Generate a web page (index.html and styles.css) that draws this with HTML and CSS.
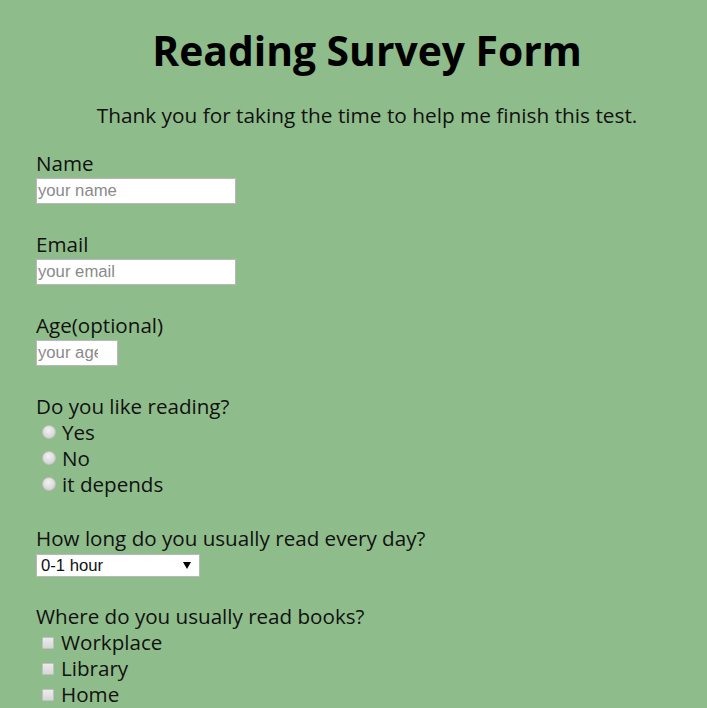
FILE: index.html
```
<!DOCTYPE html>
<html lang="en">
<head>
<meta charset="utf-8">
<title>Reading Survey Form</title>
<link rel="stylesheet" href="styles.css">
</head>
<body>
<main class="page">
  <h1 class="title">Reading Survey Form</h1>
  <p class="intro">Thank you for taking the time to help me finish this test.</p>
  <form class="survey">
    <div class="field">
      <label class="label" for="name">Name</label>
      <input class="text-input wide" id="name" type="text" placeholder="your name">
    </div>
    <div class="field">
      <label class="label" for="email">Email</label>
      <input class="text-input wide" id="email" type="email" placeholder="your email">
    </div>
    <div class="field">
      <label class="label" for="age">Age(optional)</label>
      <input class="text-input narrow" id="age" type="number" placeholder="your age">
    </div>
    <div class="field">
      <div class="label">Do you like reading?</div>
      <label class="option"><input class="radio" type="radio" name="like">Yes</label>
      <label class="option"><input class="radio" type="radio" name="like">No</label>
      <label class="option"><input class="radio" type="radio" name="like">it depends</label>
    </div>
    <div class="field field-select">
      <label class="label" for="time">How long do you usually read every day?</label>
      <span class="select-wrap">
        <select class="select" id="time">
          <option>0-1 hour</option>
          <option>1-2 hours</option>
          <option>more than 2 hours</option>
        </select>
        <span class="select-arrow"></span>
      </span>
    </div>
    <div class="field">
      <div class="label">Where do you usually read books?</div>
      <label class="option"><input class="check" type="checkbox">Workplace</label>
      <label class="option"><input class="check" type="checkbox">Library</label>
      <label class="option"><input class="check" type="checkbox">Home</label>
    </div>
  </form>
</main>
</body>
</html>
```
FILE: styles.css
```
html, body {
  margin: 0;
  padding: 0;
}
body {
  background: #8fbc8b;
  color: #111;
  font-family: "Open Sans", "Noto Sans", sans-serif;
}
.page {
  padding: 22px 9px 0 36px;
}
.title {
  margin: 0;
  text-align: center;
  font-size: 40.8px;
  line-height: 56px;
  font-weight: 700;
  color: #000;
}
.intro {
  margin: 24px 0 0;
  text-align: center;
  font-size: 20.8px;
  line-height: 26px;
}
.survey {
  margin-top: 22px;
}
.field {
  margin-bottom: 27.5px;
}
.field-select {
  margin-bottom: 26px;
}
.label {
  display: block;
  font-size: 20.6px;
  line-height: 26px;
}
.text-input {
  display: block;
  box-sizing: border-box;
  height: 26px;
  margin: 1.5px 0 0;
  padding: 0 1px;
  border: 1px solid #b9b9b9;
  background: #fff;
  font-family: "Liberation Sans", Arial, sans-serif;
  font-size: 16.7px;
  color: #222;
  outline: none;
}
.text-input::placeholder {
  color: #8a8a8a;
}
.wide { width: 200px; }
.narrow {
  width: 82px;
  padding-right: 19px;
}
.narrow::-webkit-inner-spin-button,
.narrow::-webkit-outer-spin-button {
  -webkit-appearance: none;
  margin: 0;
}
.option {
  display: block;
  font-size: 20.6px;
  line-height: 26px;
}
.radio {
  -webkit-appearance: none;
  appearance: none;
  box-sizing: border-box;
  width: 14px;
  height: 14px;
  margin: 0 6px 0 6px;
  vertical-align: 1px;
  border-radius: 50%;
  border: 1px solid #c0c0c0;
  background: radial-gradient(circle at 45% 35%, #f2f2f2 0%, #dadada 60%, #c9c9c9 100%);
}
.check {
  -webkit-appearance: none;
  appearance: none;
  box-sizing: border-box;
  width: 12px;
  height: 12px;
  margin: 0 7px 0 6px;
  vertical-align: 1px;
  border: 1px solid #c0c0c0;
  border-radius: 1px;
  background: linear-gradient(#ececec, #d6d6d6);
}
.select-wrap {
  position: relative;
  display: block;
  width: 164px;
  margin-top: 3px;
}
.select {
  -webkit-appearance: none;
  appearance: none;
  display: block;
  box-sizing: border-box;
  width: 164px;
  height: 23px;
  margin: 0;
  padding: 0 0 0 4px;
  border: 1px solid #b9b9b9;
  border-radius: 0;
  background: #fff;
  color: #111;
  font-family: "Liberation Sans", Arial, sans-serif;
  font-size: 16.7px;
  outline: none;
}
.select-arrow {
  position: absolute;
  right: 9px;
  top: 8px;
  width: 0;
  height: 0;
  border-left: 4px solid transparent;
  border-right: 4px solid transparent;
  border-top: 7px solid #000;
  pointer-events: none;
}
```
